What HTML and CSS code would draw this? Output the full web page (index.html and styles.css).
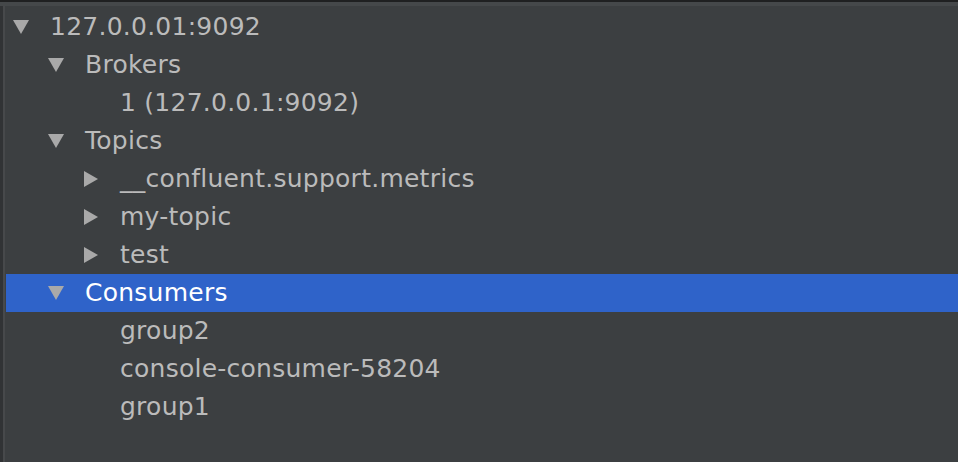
FILE: index.html
```html
<!DOCTYPE html>
<html>
<head>
<meta charset="utf-8">
<link rel="stylesheet" href="styles.css">
</head>
<body>
<div class="topbar"></div>
<div class="main">
  <div class="gutter"></div>
  <div class="tree">
    <div class="row l0"><span class="tw down"></span><span class="label">127.0.0.01:9092</span></div>
    <div class="row l1"><span class="tw down"></span><span class="label">Brokers</span></div>
    <div class="row l2"><span class="tw none"></span><span class="label">1 (127.0.0.1:9092)</span></div>
    <div class="row l1"><span class="tw down"></span><span class="label">Topics</span></div>
    <div class="row l2"><span class="tw right"></span><span class="label">__confluent.support.metrics</span></div>
    <div class="row l2"><span class="tw right"></span><span class="label">my-topic</span></div>
    <div class="row l2"><span class="tw right"></span><span class="label">test</span></div>
    <div class="row l1 selected"><span class="tw down"></span><span class="label">Consumers</span></div>
    <div class="row l2"><span class="tw none"></span><span class="label">group2</span></div>
    <div class="row l2"><span class="tw none"></span><span class="label">console-consumer-58204</span></div>
    <div class="row l2"><span class="tw none"></span><span class="label">group1</span></div>
  </div>
</div>
</body>
</html>
```
FILE: styles.css
```css
html, body {
  margin: 0;
  padding: 0;
  height: 100%;
  background: #3c3f41;
  overflow: hidden;
}
body {
  display: flex;
  flex-direction: column;
  font-family: "DejaVu Sans", "Open Sans", sans-serif;
  font-size: 25px;
  color: #bbbbbb;
}
.topbar {
  height: 4px;
  border-top: 2px solid #1f2021;
  background: #45484a;
  flex: none;
}
.main {
  flex: 1;
  display: flex;
}
.gutter {
  width: 2px;
  flex: none;
  border-left: 3px solid #313335;
  background: #47494b;
  margin-right: 1px;
}
.tree {
  flex: 1;
  display: flex;
  flex-direction: column;
  padding-top: 2px;
}
.row {
  height: 38px;
  display: flex;
  align-items: center;
  white-space: nowrap;
}
.l0 { padding-left: 7px; }
.l1 { padding-left: 42px; }
.l2 { padding-left: 77px; }
.row.selected {
  background: #2f63c9;
  color: #ffffff;
}
.tw {
  width: 16px;
  height: 16px;
  margin-right: 21px;
  flex: none;
  position: relative;
}
.tw.down::before {
  content: "";
  position: absolute;
  left: 0;
  top: 1px;
  border-left: 8px solid transparent;
  border-right: 8px solid transparent;
  border-top: 14px solid #a9a9a9;
}
.tw.right::before {
  content: "";
  position: absolute;
  left: 1px;
  top: 0;
  border-top: 8px solid transparent;
  border-bottom: 8px solid transparent;
  border-left: 14px solid #a9a9a9;
}
.label {
  line-height: 38px;
  letter-spacing: 0.25px;
}
```
